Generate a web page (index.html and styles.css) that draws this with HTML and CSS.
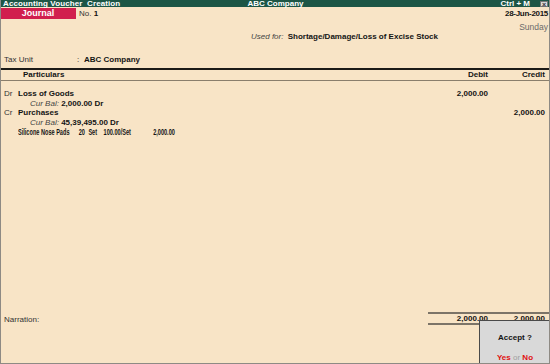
FILE: index.html
```html
<!DOCTYPE html>
<html lang="en">
<head>
    <meta charset="UTF-8">
    <title>Accounting Voucher Creation</title>
    <link rel="stylesheet" href="styles.css">
</head>
<body>
    <div class="screen">
        <div class="titlebar">
            <span class="tb-left">Accounting Voucher&nbsp; Creation</span>
            <span class="tb-center">ABC Company</span>
            <span class="tb-right">Ctrl + M <span class="close-box">&#215;</span></span>
        </div>

        <div class="voucher-head">
            <div class="head-row">
                <span class="vtype">Journal</span>
                <span class="vno">No. <b>1</b></span>
                <span class="vdate">28-Jun-2015</span>
            </div>
            <div class="vday">Sunday</div>
            <div class="used-for"><i>Used for:</i> <b>Shortage/Damage/Loss of Excise Stock</b></div>
            <div class="tax-unit">
                <span class="tax-label">Tax Unit</span>
                <span class="tax-colon">:</span>
                <b>ABC Company</b>
            </div>
        </div>

        <div class="grid-head">
            <span class="col-part">Particulars</span>
            <span class="col-amt">Debit</span>
            <span class="col-amt">Credit</span>
        </div>

        <div class="entries">
            <div class="entry">
                <span class="col-part"><span class="drcr">Dr</span><b>Loss of Goods</b></span>
                <span class="col-amt">2,000.00</span>
                <span class="col-amt"></span>
            </div>
            <div class="cur-bal"><i>Cur Bal:</i> <b>2,000.00 Dr</b></div>
            <div class="entry">
                <span class="col-part"><span class="drcr">Cr</span><b>Purchases</b></span>
                <span class="col-amt"></span>
                <span class="col-amt">2,000.00</span>
            </div>
            <div class="cur-bal"><i>Cur Bal:</i> <b>45,39,495.00 Dr</b></div>
            <div class="stock-line">
                <span class="stock-name">Silicone Nose Pads</span>
                <span class="stock-qty">20 Set</span>
                <span class="stock-rate">100.00/Set</span>
                <span class="stock-amt">2,000.00</span>
            </div>
        </div>

        <div class="footer">
            <span class="narration">Narration:</span>
            <div class="totals">
                <span class="col-amt">2,000.00</span>
                <span class="col-amt">2,000.00</span>
            </div>
        </div>

        <div class="accept">
            <div class="accept-title">Accept ?</div>
            <div class="accept-opts"><span class="opt">Yes</span> <span class="or">or</span> <span class="opt">No</span></div>
        </div>
    </div>
</body>
</html>
```

FILE: styles.css
```css
body {
    margin: 0;
    font-family: 'Liberation Sans', Arial, sans-serif;
    font-size: 8px;
    color: #141414;
    background-color: #f8e4c6;
}

.screen {
    width: 550px;
    height: 364px;
    box-sizing: border-box;
    border: 1px solid #8e8a84;
    border-top: none;
    display: flex;
    flex-direction: column;
    position: relative;
    overflow: hidden;
    background-color: #f8e4c6;
}

/* title bar */
.titlebar {
    height: 7px;
    line-height: 7px;
    margin: 0 -1px;
    padding: 0 2px 0 3px;
    background-color: #1d5646;
    color: #fff;
    font-weight: bold;
    font-size: 8px;
    display: grid;
    grid-template-columns: 1fr auto 1fr;
    white-space: nowrap;
}

.tb-left {
    letter-spacing: 0.1px;
}

.tb-right {
    justify-self: end;
    display: flex;
    align-items: center;
}

.close-box {
    display: inline-block;
    width: 8px;
    height: 6px;
    line-height: 6px;
    margin-left: 10px;
    background-color: #d8d8d8;
    color: #333;
    font-size: 7px;
    text-align: center;
    border: 1px solid #777;
    box-sizing: border-box;
}

/* voucher header */
.voucher-head {
    padding-top: 1px;
}

.head-row {
    display: flex;
    align-items: flex-start;
    height: 11px;
}

.vtype {
    width: 76px;
    height: 11px;
    line-height: 11px;
    margin-left: -1px;
    background-color: #d11f4e;
    color: #fff;
    font-weight: bold;
    font-size: 9px;
    text-align: center;
}

.vno {
    margin-left: 3px;
    line-height: 11px;
    color: #333;
}

.vno b {
    color: #111;
}

.vdate {
    margin-left: auto;
    margin-right: 1px;
    line-height: 11px;
    font-weight: bold;
    letter-spacing: -0.3px;
}

.vday {
    text-align: right;
    margin-top: 4px;
    margin-right: 1px;
    line-height: 9px;
    font-size: 8.5px;
    color: #6b6b6b;
}

.used-for {
    padding-left: 250px;
    line-height: 10px;
}

.used-for i {
    color: #444;
}

.used-for b {
    margin-left: 2px;
}

.tax-unit {
    display: flex;
    margin-top: 13px;
    padding-left: 3px;
    line-height: 10px;
}

.tax-label {
    width: 73px;
    color: #333;
}

.tax-colon {
    width: 7px;
}

/* particulars table */
.grid-head,
.entry,
.totals {
    display: grid;
    grid-template-columns: 1fr 60px 57px;
    padding-right: 4px;
}

.grid-head {
    margin-top: 3px;
    border-top: 2px solid #1c1a17;
    border-bottom: 1px solid #8a7e6c;
    line-height: 10px;
    font-weight: bold;
}

.grid-head .col-part {
    padding-left: 22px;
}

.col-amt {
    text-align: right;
    font-weight: bold;
}

.entries {
    padding-top: 8px;
    line-height: 9.5px;
}

.drcr {
    display: inline-block;
    width: 14px;
    padding-left: 3px;
    color: #333;
}

.cur-bal {
    padding-left: 29px;
}

.cur-bal i {
    color: #444;
}

/* condensed stock item line */
.stock-line {
    display: flex;
    width: 300px;
    margin-left: 17px;
    font-weight: bold;
    font-size: 9px;
    line-height: 10px;
    white-space: nowrap;
    transform: scaleX(0.62);
    transform-origin: left center;
}

.stock-name {
    width: 98px;
}

.stock-qty {
    width: 40px;
    word-spacing: 3px;
}

.stock-rate {
    width: 80px;
}

/* footer */
.footer {
    margin-top: auto;
    padding-bottom: 38px;
    display: flex;
    align-items: center;
}

.narration {
    flex: 1;
    padding-left: 3px;
    padding-top: 2px;
    color: #333;
}

.totals {
    width: 117px;
    grid-template-columns: 60px 57px;
    border-top: 2px solid #7c7468;
    border-bottom: 2px solid #7c7468;
    margin-right: -1px;
    line-height: 9px;
    padding-right: 5px;
}

/* accept prompt */
.accept {
    position: absolute;
    left: 478px;
    top: 320px;
    width: 71px;
    height: 43px;
    box-sizing: border-box;
    border: 1px solid #4a4a4a;
    border-right: none;
    border-bottom: none;
    background-color: #d9d9d9;
    text-align: center;
    font-weight: bold;
}

.accept-title {
    margin-top: 12px;
    line-height: 10px;
}

.accept-opts {
    margin-top: 10px;
    line-height: 10px;
}

.opt {
    color: #e01010;
}

.or {
    color: #a0a0a0;
    font-weight: normal;
}
```
